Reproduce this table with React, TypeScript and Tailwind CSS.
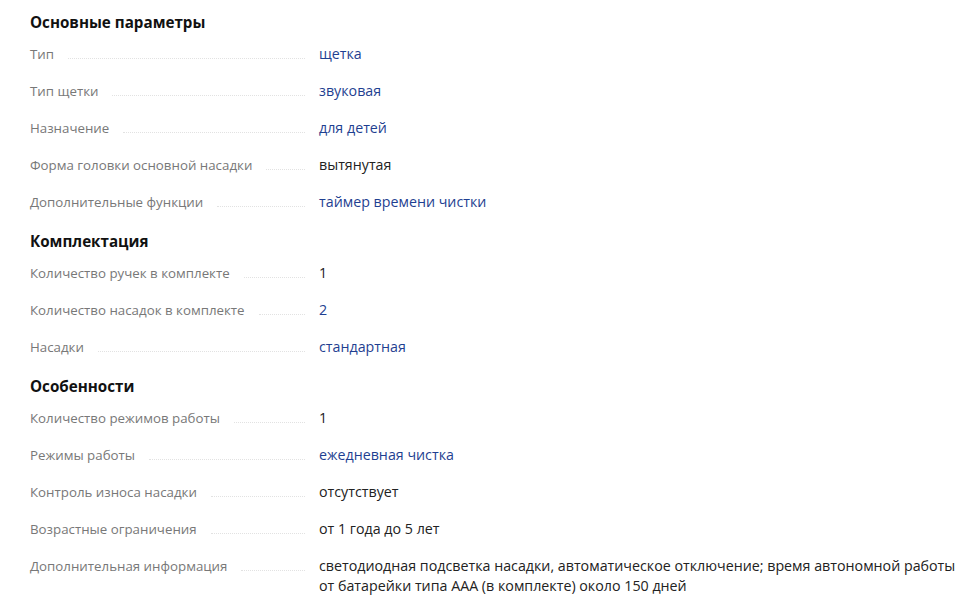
import React from 'react';

type Spec = { label: string; value: string; link?: boolean };
type Group = { title: string; rows: Spec[] };

const groups: Group[] = [
  {
    title: 'Основные параметры',
    rows: [
      { label: 'Тип', value: 'щетка', link: true },
      { label: 'Тип щетки', value: 'звуковая', link: true },
      { label: 'Назначение', value: 'для детей', link: true },
      { label: 'Форма головки основной насадки', value: 'вытянутая' },
      { label: 'Дополнительные функции', value: 'таймер времени чистки', link: true },
    ],
  },
  {
    title: 'Комплектация',
    rows: [
      { label: 'Количество ручек в комплекте', value: '1' },
      { label: 'Количество насадок в комплекте', value: '2', link: true },
      { label: 'Насадки', value: 'стандартная', link: true },
    ],
  },
  {
    title: 'Особенности',
    rows: [
      { label: 'Количество режимов работы', value: '1' },
      { label: 'Режимы работы', value: 'ежедневная чистка', link: true },
      { label: 'Контроль износа насадки', value: 'отсутствует' },
      { label: 'Возрастные ограничения', value: 'от 1 года до 5 лет' },
      {
        label: 'Дополнительная информация',
        value:
          'светодиодная подсветка насадки, автоматическое отключение; время автономной работы от батарейки типа AAA (в комплекте) около 150 дней',
      },
    ],
  },
];

const SpecRow = ({ label, value, link }: Spec) => (
  <div className="grid grid-cols-[289px_1fr] mb-[17px] leading-[20px]">
    <div className="flex items-start pr-[14px]">
      <span className="text-[#787878] text-[13.3px] whitespace-nowrap">{label}</span>
      <span className="flex-1 ml-[14px] h-[15px] border-b border-dotted border-[#e2e2e2]" />
    </div>
    <div className={'text-[14.25px] ' + (link ? 'text-[#1f3f91]' : 'text-[#222]')}>{value}</div>
  </div>
);

export default function App() {
  return (
    <div className="bg-white min-h-screen pl-[30px] pr-[10px] pt-[10px]" style={{ fontFamily: '"Open Sans", sans-serif' }}>
      {groups.map((g) => (
        <div key={g.title}>
          <h2 className="text-[15.2px] leading-[24px] font-bold text-[#111] mb-[10px]">{g.title}</h2>
          {g.rows.map((r) => (
            <SpecRow key={r.label} {...r} />
          ))}
        </div>
      ))}
    </div>
  );
}
